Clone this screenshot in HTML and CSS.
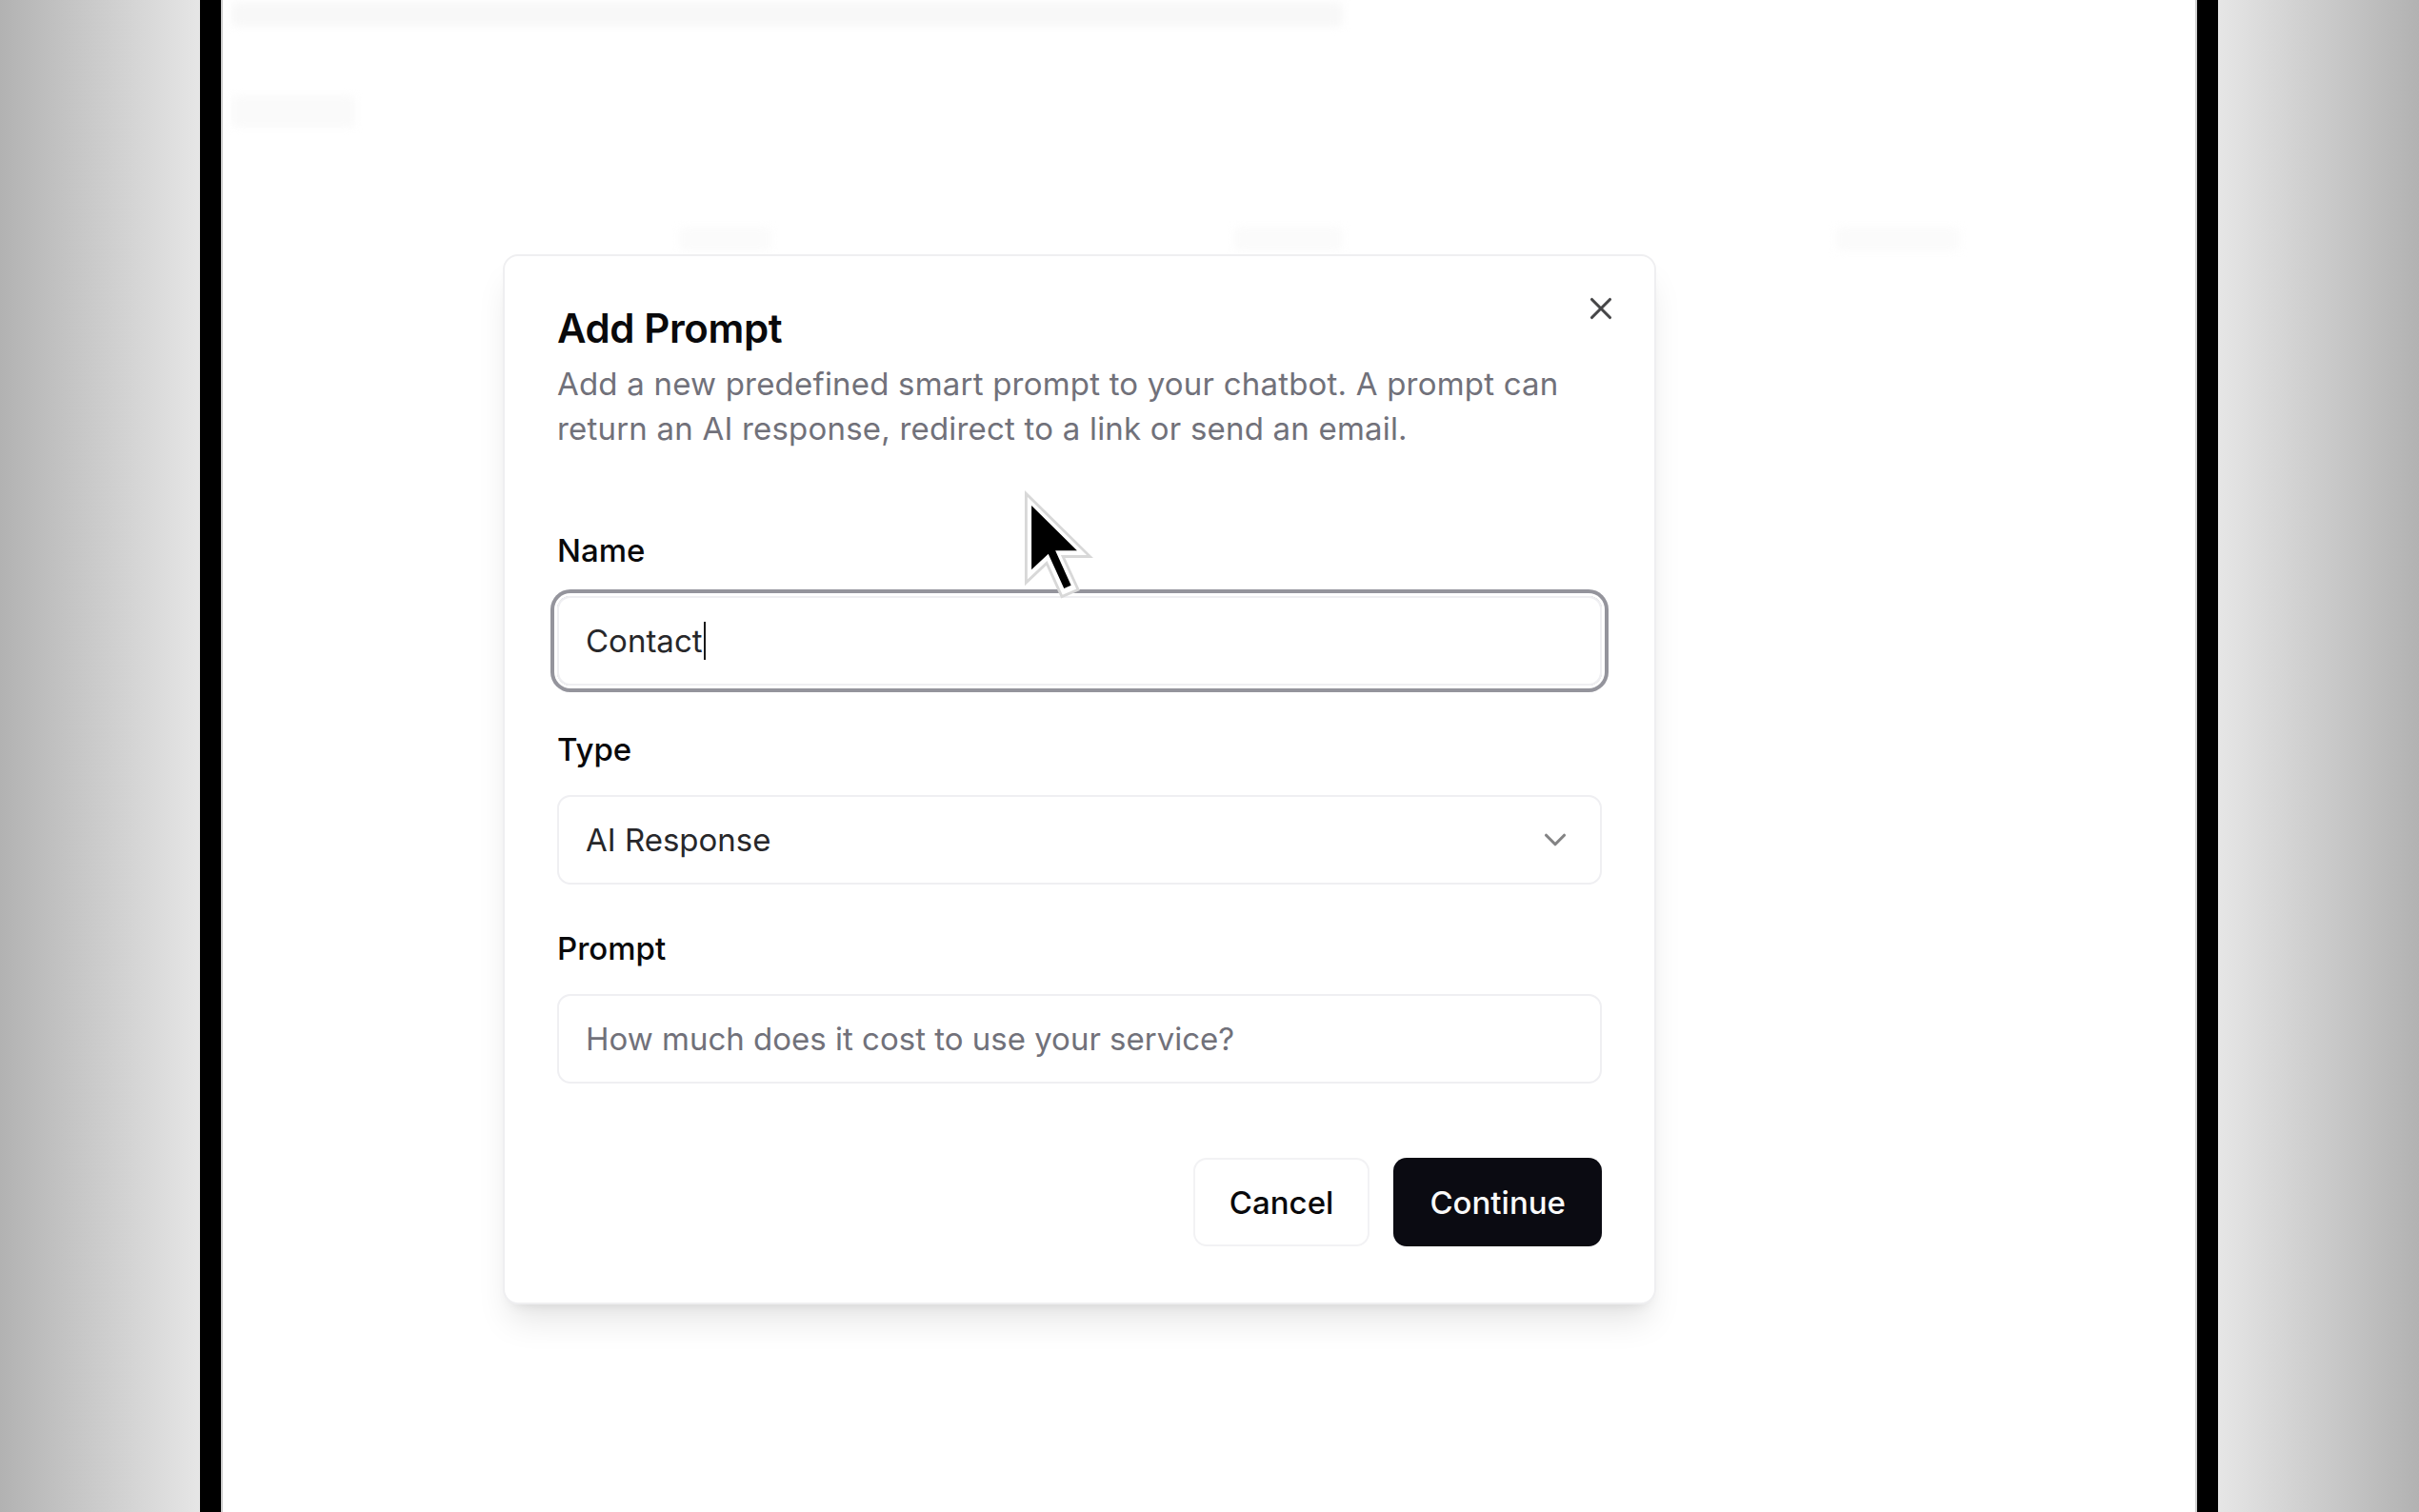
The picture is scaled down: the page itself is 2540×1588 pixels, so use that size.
FILE: index.html
```html
<!DOCTYPE html>
<html lang="en">
<head>
<meta charset="utf-8">
<title>Add Prompt</title>
<link rel="stylesheet" href="styles.css">
</head>
<body>
<div class="frame">
  <div class="side side-left"></div>
  <div class="bar"></div>
  <main class="screen">
    <div class="bg-page">
      <div class="ghost ghost-top"></div>
      <div class="ghost ghost-small"></div>
      <div class="ghost-row">
        <div class="ghost ghost-col1"></div>
        <div class="ghost ghost-col2"></div>
        <div class="ghost ghost-col3"></div>
      </div>
    </div>
    <div class="layer">
      <section class="dialog" role="dialog" aria-labelledby="dlg-title">
        <button class="close" aria-label="Close">
          <svg viewBox="0 0 24 24" fill="none" stroke="currentColor" stroke-width="2" stroke-linecap="round" stroke-linejoin="round"><path d="M18 6 6 18"/><path d="m6 6 12 12"/></svg>
        </button>
        <header class="dialog-header">
          <h2 id="dlg-title" class="title">Add Prompt</h2>
          <p class="desc">Add a new predefined smart prompt to your chatbot. A prompt can return an AI response, redirect to a link or send an email.</p>
        </header>
        <div class="form">
          <div class="field">
            <label class="label">Name</label>
            <div class="input input-focus"><span class="value">Contact</span><span class="caret"></span></div>
          </div>
          <div class="field">
            <label class="label">Type</label>
            <div class="input select"><span class="value">AI Response</span>
              <svg class="chevron" viewBox="0 0 24 24" fill="none" stroke="currentColor" stroke-width="2" stroke-linecap="round" stroke-linejoin="round"><path d="m6 9 6 6 6-6"/></svg>
            </div>
          </div>
          <div class="field">
            <label class="label">Prompt</label>
            <div class="input"><span class="placeholder">How much does it cost to use your service?</span></div>
          </div>
        </div>
        <footer class="footer">
          <button class="btn btn-outline">Cancel</button>
          <button class="btn btn-primary">Continue</button>
        </footer>
        <svg class="cursor" viewBox="0 0 13 20" aria-hidden="true">
          <path d="M0.6 0.6 L0.6 17 L4.4 13.4 L7.2 19.6 L10.2 18.3 L7.4 12.2 L12.4 12.2 Z" fill="#fff" stroke="#d8d8d8" stroke-width="0.5"/>
          <path d="M1.6 2.8 L1.6 14.6 L4.7 11.7 L7.6 18.1 L8.9 17.5 L6 11.1 L10 11.1 Z" fill="#000"/>
        </svg>
      </section>
    </div>
  </main>
  <div class="bar"></div>
  <div class="side side-right"></div>
</div>
</body>
</html>
```

FILE: styles.css
```css
* { box-sizing: border-box; }
html, body { margin: 0; padding: 0; }
body {
  width: 2540px;
  height: 1588px;
  overflow: hidden;
  font-family: "Inter", "Noto Sans", sans-serif;
  color: #09090b;
  background: #fff;
}
.frame {
  display: flex;
  width: 2540px;
  height: 1588px;
}
.side { width: 210px; flex: none; }
.side-left { background: linear-gradient(to right, #b2b2b2, #e6e6e6); }
.side-right { width: 211px; background: linear-gradient(to left, #b2b2b2, #e6e6e6); }
.bar { width: 22px; flex: none; background: #000; }
.screen {
  flex: 1;
  display: grid;
  background: #fff;
  border-left: 2px solid #d0d0d0;
  border-right: 2px solid #d0d0d0;
}
.bg-page, .layer { grid-area: 1 / 1; }
.bg-page {
  padding: 0 0 0 9px;
  display: flex;
  flex-direction: column;
}
.ghost { background: #f8f8f8; border-radius: 6px; filter: blur(4px); }
.ghost-top { width: 1167px; height: 26px; margin-top: 2px; }
.ghost-small { width: 130px; height: 34px; margin-top: 72px; background: #fafafa; }
.ghost-row { display: flex; margin-top: 104px; padding-left: 470px; gap: 0; }
.ghost-col1 { width: 97px; height: 26px; background: #fbfbfb; }
.ghost-col2 { width: 114px; height: 26px; margin-left: 486px; background: #fbfbfb; }
.ghost-col3 { width: 130px; height: 26px; margin-left: 518px; background: #fbfbfb; }

.layer {
  padding: 267px 0 0 294px;
}
.dialog {
  position: relative;
  width: 1211px;
  background: #fff;
  border: 2px solid #efeff1;
  border-radius: 16px;
  padding: 55px 55px 59px;
  box-shadow: 0 24px 35px -7px rgba(0,0,0,0.10), 0 9px 14px -9px rgba(0,0,0,0.10);
}
.close {
  position: absolute;
  top: 36px;
  right: 37px;
  width: 38px;
  height: 38px;
  padding: 0;
  border: 0;
  background: transparent;
  color: #09090b;
  opacity: 0.75;
}
.close svg { width: 38px; height: 38px; display: block; }

.dialog-header { display: flex; flex-direction: column; gap: 14px; }
.title {
  margin: 0;
  font-size: 42px;
  line-height: 42px;
  font-weight: 600;
  letter-spacing: -0.4px;
}
.desc {
  margin: 0;
  font-size: 33px;
  line-height: 47px;
  color: #71717a;
  letter-spacing: 0.2px;
  max-width: 1095px;
}
.form {
  margin-top: 88px;
  display: flex;
  flex-direction: column;
  gap: 51px;
}
.field { display: flex; flex-direction: column; gap: 31px; }
.label {
  font-size: 33px;
  line-height: 33px;
  font-weight: 500;
}
.input {
  height: 94px;
  border: 2px solid #efeff2;
  border-radius: 14px;
  padding: 0 28px;
  display: flex;
  align-items: center;
  font-size: 33px;
  color: #27272a;
}
.input-focus {
  box-shadow: 0 0 0 3px #fff, 0 0 0 7px #94949c;
}
.caret {
  width: 2px;
  height: 40px;
  background: #1a1a1a;
  margin-left: 1px;
}
.select { justify-content: space-between; }
.chevron { width: 38px; height: 38px; opacity: 0.5; color: #09090b; }
.placeholder { color: #71717a; }

.footer {
  margin-top: 78px;
  display: flex;
  justify-content: flex-end;
  gap: 25px;
}
.btn {
  height: 93px;
  padding: 0 36px;
  border-radius: 14px;
  font-family: inherit;
  font-size: 33px;
  font-weight: 500;
}
.btn-outline {
  background: #fff;
  border: 2px solid #f2f2f4;
  color: #09090b;
}
.btn-primary {
  padding: 0 38px;
  background: #0b0b12;
  border: 0;
  color: #fafafa;
}
.cursor {
  position: absolute;
  left: 544px;
  top: 246px;
  width: 74px;
  height: 114px;
}
```
